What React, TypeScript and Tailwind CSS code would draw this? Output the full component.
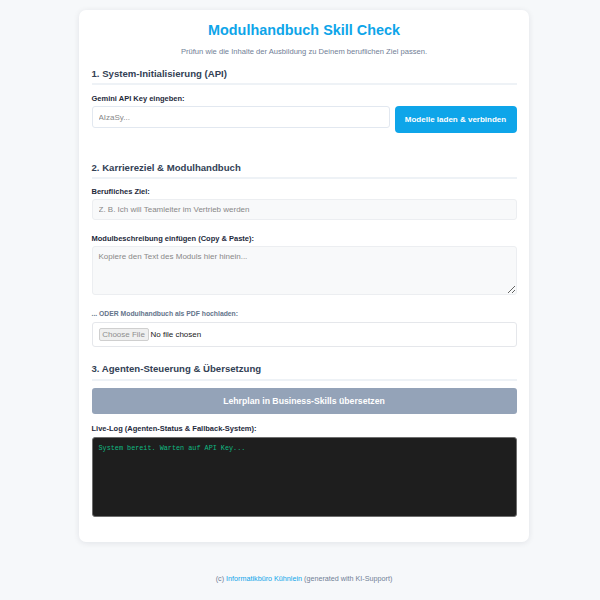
export default function App() {
  return (
    <div className="min-h-[600px] bg-[#f6f8fa] pt-[10px] pl-[8px] font-['Liberation_Sans',Arial,sans-serif] text-[#334155]">
      <div className="mx-auto w-[450px] rounded-[7px] bg-white px-[12.5px] pt-[12px] pb-[24.5px] shadow-[0_1px_6px_rgba(15,23,42,0.09)]">
        <h1 className="text-center text-[14.4px] font-bold leading-[17px] text-[#0ea5e9]">Modulhandbuch Skill Check</h1>
        <p className="mt-[8px] text-center text-[7.6px] leading-[10px] text-[#718096]">
          Prüfun wie die Inhalte der Ausbildung zu Deinem beruflichen Ziel passen.
        </p>

        {/* 1 */}
        <h2 className="mt-[11px] border-b-2 border-[#eef2f6] pb-[3px] text-[9.6px] font-bold leading-[12px] text-[#334155]">
          1. System-Initialisierung (API)
        </h2>
        <label className="mt-[8.5px] block text-[7.5px] font-bold leading-[9px] text-[#1e293b]">Gemini API Key eingeben:</label>
        <div className="mt-[3.5px] flex items-start gap-[5px]">
          <input
            className="h-[22px] flex-1 rounded-[3px] border border-[#e2e8f0] bg-white px-[6px] text-[8px] outline-none placeholder:text-[#888]"
            placeholder="AIzaSy..."
          />
          <button className="h-[27px] w-[122px] rounded-[4px] bg-[#0ea5e9] text-[8px] font-bold text-white">
            Modelle laden &amp; verbinden
          </button>
        </div>

        {/* 2 */}
        <h2 className="mt-[28.5px] border-b-2 border-[#eef2f6] pb-[3px] text-[9.6px] font-bold leading-[12px] text-[#334155]">
          2. Karriereziel &amp; Modulhandbuch
        </h2>
        <label className="mt-[8px] block text-[7.5px] font-bold leading-[9px] text-[#1e293b]">Berufliches Ziel:</label>
        <input
          className="mt-[3.8px] block h-[21px] w-full rounded-[3px] border border-[#eceef1] bg-[#f8f9fa] px-[6px] text-[8px] outline-none placeholder:text-[#888]"
          placeholder="Z. B. Ich will Teamleiter im Vertrieb werden"
        />
        <label className="mt-[13.5px] block text-[7.5px] font-bold leading-[9px] text-[#1e293b]">
          Modulbeschreibung einfügen (Copy &amp; Paste):
        </label>
        <textarea
          className="mt-[3.2px] block h-[49.5px] w-full rounded-[3px] border border-[#eceef1] bg-[#f8f9fa] px-[6px] pt-[5.5px] text-[8px] leading-[9.6px] outline-none placeholder:text-[#888]"
          placeholder="Kopiere den Text des Moduls hier hinein..."
        />
        <label className="mt-[15px] block text-[6.8px] font-bold leading-[8px] text-[#64748b]">
          ... ODER Modulhandbuch als PDF hochladen:
        </label>
        <div className="mt-[4px] flex h-[24.5px] items-center rounded-[3px] border border-[#e5e7eb] bg-white px-[6px]">
          <span className="flex h-[12.5px] w-[50px] items-center justify-center rounded-[2px] border border-[#cfcfcf] bg-[#efefef] text-[8px] text-[#8e8e8e]">
            Choose File
          </span>
          <span className="ml-[2px] text-[8px] text-[#222]">No file chosen</span>
        </div>

        {/* 3 */}
        <h2 className="mt-[16.5px] border-b-2 border-[#eef2f6] pb-[4px] text-[9.6px] font-bold leading-[12px] text-[#334155]">
          3. Agenten-Steuerung &amp; Übersetzung
        </h2>
        <button className="mt-[7px] block h-[25.5px] w-full rounded-[3px] bg-[#94a3b8] text-[8.7px] font-bold text-white">
          Lehrplan in Business-Skills übersetzen
        </button>
        <label className="mt-[10px] block text-[7.5px] font-bold leading-[9px] text-[#1e293b]">
          Live-Log (Agenten-Status &amp; Fallback-System):
        </label>
        <div className="mt-[4.5px] h-[80px] rounded-[3px] border border-[#6e6e6e] bg-[#1e1e1e] px-[6px] pt-[5.5px] font-['Liberation_Mono',monospace] text-[6.8px] leading-[9px] text-[#10b981]">
          System bereit. Warten auf API Key...
        </div>
      </div>

      <p className="mt-[32px] text-center text-[7.2px] leading-[9px] text-[#718096]">
        (c) <span className="text-[#0ea5e9]">Informatikbüro Kühnlein</span> (generated with KI-Support)
      </p>
    </div>
  );
}
